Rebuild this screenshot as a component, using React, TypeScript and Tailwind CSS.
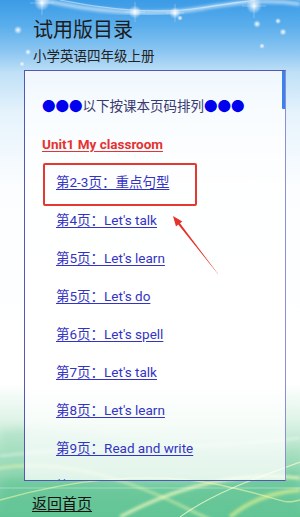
import React from "react";

const items = [
  "第2-3页：重点句型",
  "第4页：Let's talk",
  "第5页：Let's learn",
  "第5页：Let's do",
  "第6页：Let's spell",
  "第7页：Let's talk",
  "第8页：Let's learn",
  "第9页：Read and write",
  "第10页：Let's check",
];

function Background() {
  const stars: [number, number, number][] = [
    [42, 3, 3],
    [135, 12, 2.5],
    [175, 13, 2.2],
    [254, 6, 3],
    [18, 30, 1.6],
    [257, 24, 1.5],
    [283, 32, 1.4],
    [278, 21, 1.2],
    [28, 52, 1.2],
    [180, 18, 1.1],
    [262, 46, 1.1],
    [22, 64, 1.0],
  ];
  return (
    <svg
      className="absolute inset-0 h-full w-full"
      viewBox="0 0 300 517"
      preserveAspectRatio="none"
    >
      <defs>
        <linearGradient id="bgv" x1="0" y1="0" x2="0" y2="1">
          <stop offset="0" stopColor="#3b9be6" />
          <stop offset="0.05" stopColor="#5aaeec" />
          <stop offset="0.1" stopColor="#8cc6f1" />
          <stop offset="0.14" stopColor="#bfe0f7" />
          <stop offset="0.22" stopColor="#e6f3fc" />
          <stop offset="0.36" stopColor="#fbfdff" />
          <stop offset="0.74" stopColor="#ffffff" />
          <stop offset="0.81" stopColor="#e0f4e8" />
          <stop offset="0.88" stopColor="#ace1c4" />
          <stop offset="1" stopColor="#5fc494" />
        </linearGradient>
        <radialGradient id="star">
          <stop offset="0" stopColor="#ffffff" stopOpacity="1" />
          <stop offset="0.35" stopColor="#ffffff" stopOpacity="0.6" />
          <stop offset="1" stopColor="#ffffff" stopOpacity="0" />
        </radialGradient>
        <filter id="blur2">
          <feGaussianBlur stdDeviation="1.5" />
        </filter>
        <filter id="blur4">
          <feGaussianBlur stdDeviation="4" />
        </filter>
      </defs>
      <rect x="0" y="0" width="300" height="517" fill="url(#bgv)" />
      <path
        d="M35 -2 C 90 12, 150 16, 190 10 S 260 -2, 300 4"
        stroke="#ffffff"
        strokeOpacity="0.55"
        strokeWidth="4"
        fill="none"
        filter="url(#blur2)"
      />
      <path
        d="M60 0 C 110 10, 160 14, 200 8 S 270 -4, 300 0"
        stroke="#ffffff"
        strokeOpacity="0.45"
        strokeWidth="1.2"
        fill="none"
      />
      {stars.map(([x, y, r], i) => (
        <g key={i}>
          <circle cx={x} cy={y} r={r * 2.6} fill="url(#star)" />
          {r > 2 && (
            <>
              <line x1={x - r * 4} y1={y} x2={x + r * 4} y2={y} stroke="#fff" strokeOpacity="0.6" strokeWidth="0.5" />
              <line x1={x} y1={y - r * 4} x2={x} y2={y + r * 4} stroke="#fff" strokeOpacity="0.6" strokeWidth="0.5" />
            </>
          )}
        </g>
      ))}
      <path d="M0 430 C 80 420, 160 465, 300 450 L300 517 L0 517 Z" fill="#8fd6b0" opacity="0.35" filter="url(#blur4)" />
      <path d="M0 480 C 60 470, 140 500, 300 470 L300 517 L0 517 Z" fill="#4fbd8a" opacity="0.45" filter="url(#blur4)" />
      <path d="M-10 470 C 60 455, 130 480, 190 510 S 260 530, 300 520" stroke="#f6fbb0" strokeOpacity="0.7" strokeWidth="2" fill="none" filter="url(#blur2)" />
      <path d="M120 517 C 170 490, 230 470, 300 478" stroke="#f9fcc0" strokeOpacity="0.8" strokeWidth="3" fill="none" filter="url(#blur2)" />
      <path d="M0 500 C 70 480, 150 470, 220 485 S 280 505, 300 500" stroke="#eef9a8" strokeOpacity="0.6" strokeWidth="1.5" fill="none" />
      <path d="M180 517 C 210 495, 250 480, 300 462" stroke="#fbfdd0" strokeOpacity="0.7" strokeWidth="1.2" fill="none" />
      <path d="M0 456 C 90 445, 200 450, 300 438" stroke="#ffffff" strokeOpacity="0.5" strokeWidth="2" fill="none" filter="url(#blur2)" />
      <path d="M230 517 C 250 500, 275 492, 300 490" stroke="#f4fa90" strokeOpacity="0.6" strokeWidth="4" fill="none" filter="url(#blur2)" />
      <line x1="0" y1="488" x2="300" y2="488" stroke="#ffffff" strokeOpacity="0.35" strokeWidth="1" />
    </svg>
  );
}

export default function App() {
  return (
    <div className="relative h-[517px] w-[300px] overflow-hidden font-['Roboto','Noto_Sans_CJK_SC',sans-serif]">
      <Background />
      <div className="relative flex h-full flex-col">
        <div className="pl-[33px] pt-[18px]">
          <div className="text-[20px] leading-[24px] text-[#1c1c1c]">试用版目录</div>
          <div className="mt-[5px] text-[13.5px] leading-[18px] text-[#222]">小学英语四年级上册</div>
        </div>
        <div className="relative ml-[24px] mt-[5px] h-[411px] w-[262px] overflow-hidden border border-[#5656b4] border-r-[#8f8fd0] bg-white/75">
          <div className="absolute right-[-1px] top-[-1px] h-[39px] w-[4px] rounded-b-[1px] bg-[#3a82ee]" />
          <div className="pl-[17px] pt-[16px] text-[13.5px]">
            <div className="flex h-[38px] items-center text-[#3a3a72]">
              <span className="text-[#0000ee]">●●●</span>
              <span>以下按课本页码排列</span>
              <span className="text-[#0000ee]">●●●</span>
            </div>
            <div className="flex h-[38px] items-center">
              <span className="font-bold text-[#e53232] underline underline-offset-2">Unit1 My classroom</span>
            </div>
            {items.map((t, i) => (
              <div key={i} className="flex h-[38px] items-center pl-[14px]">
                <a className="text-[#3333c4] underline underline-offset-2">{t}</a>
              </div>
            ))}
          </div>
        </div>
        <div className="mt-[11px] pl-[32px]">
          <a className="text-[15px] leading-[20px] text-[#111] underline underline-offset-2">返回首页</a>
        </div>
      </div>
      <div className="absolute left-[43px] top-[163px] h-[43px] w-[154px] rounded-[2px] border-2 border-[#e4392f]" />
      <svg className="absolute left-0 top-0 h-[517px] w-[300px]" viewBox="0 0 300 517">
        <polygon
          points="173,216 182.3,221.4 180.0,223.2 218.1,274.1 217.9,273.9 178.2,224.6 176.0,226.4"
          fill="#e6322a"
        />
      </svg>
    </div>
  );
}
